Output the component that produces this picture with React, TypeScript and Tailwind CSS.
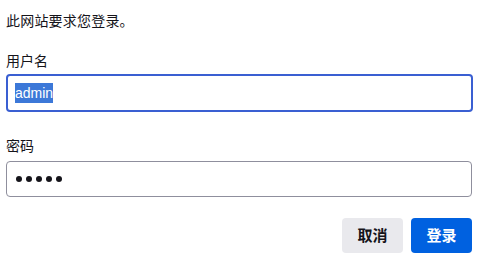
export default function App() {
  return (
    <div
      className="h-[263px] w-[482px] bg-white px-[6px] pt-[10px] text-[14px] text-[#15141a]"
      style={{ fontFamily: '"Noto Sans CJK SC", "Liberation Sans", sans-serif' }}
    >
      <p className="leading-[20px] tracking-[0.2px]">此网站要求您登录。</p>

      <label className="mt-[20px] block leading-[20px]">用户名</label>
      <div className="mt-[4px] flex h-[38px] w-[467px] items-center rounded-[4px] border-2 border-[#3a5fd2] pl-[7px]">
        <span
          className="bg-[#3c78d8] text-[14px] leading-[20px] text-white"
          style={{ fontFamily: '"Liberation Sans", sans-serif' }}
        >
          admin
        </span>
      </div>

      <label className="mt-[23px] block leading-[20px]">密码</label>
      <div className="mt-[6px] flex h-[36px] w-[466px] items-center gap-[4px] rounded-[4px] border border-[#8f8f9d] pl-[9px]">
        {[0, 1, 2, 3, 4].map((i) => (
          <span key={i} className="h-[6px] w-[6px] rounded-full bg-[#15141a]" />
        ))}
      </div>

      <div className="mt-[21px] flex w-[466px] justify-end gap-[8px]">
        <button className="h-[35px] w-[61px] rounded-[4px] bg-[#e9e9ed] text-[15px] font-bold text-[#15141a]">
          取消
        </button>
        <button className="h-[35px] w-[61px] rounded-[4px] bg-[#0061e0] text-[15px] font-bold text-white">
          登录
        </button>
      </div>
    </div>
  );
}
